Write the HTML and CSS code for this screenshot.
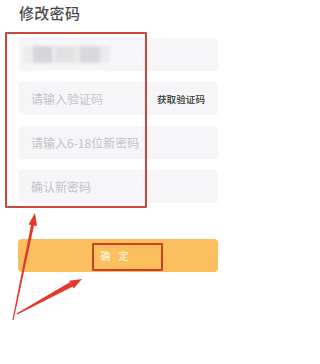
FILE: index.html
```html
<!DOCTYPE html>
<html lang="zh">
<head>
<meta charset="utf-8">
<title>修改密码</title>
<link rel="stylesheet" href="styles.css">
</head>
<body>
<div class="page">
  <h1 class="title">修改密码</h1>
  <div class="form">
    <div class="field masked">
      <span class="blur"></span>
    </div>
    <div class="field">
      <span class="ph">请输入验证码</span>
      <span class="code">获取验证码</span>
    </div>
    <div class="field"><span class="ph">请输入6-18位新密码</span></div>
    <div class="field"><span class="ph">确认新密码</span></div>
  </div>
  <button class="submit">确 定</button>

  <div class="mark mark-form"></div>
  <div class="mark mark-btn"></div>
  <svg class="arrows" width="242" height="364" viewBox="0 0 242 364">
    <polygon points="12.4,320 13.6,320 34.2,224.6 31.2,224" fill="#e5382b"/>
    <polygon points="35,213 37,226 28.5,224.4" fill="#e5382b"/>
    <polygon points="16.6,313.6 17.4,314.4 72.8,286.5 70.2,282" fill="#e5382b"/>
    <polygon points="82,279 73.6,288.6 69.2,280.8" fill="#e5382b"/>
  </svg>
</div>
</body>
</html>
```

FILE: styles.css
```css
html, body {
  margin: 0;
  padding: 0;
  background: #ffffff;
}
body {
  font-family: "Noto Sans CJK SC", "Noto Sans", sans-serif;
}
.page {
  position: relative;
  width: 242px;
  height: 364px;
  overflow: hidden;
  display: flex;
  flex-direction: column;
  padding: 3px 24px 0 19px;
  box-sizing: border-box;
}
.title {
  margin: 0;
  font-size: 15px;
  line-height: 20px;
  font-weight: 500;
  color: #4a4a4a;
  letter-spacing: 0.3px;
}
.form {
  margin-top: 15px;
  display: flex;
  flex-direction: column;
  gap: 11px;
}
.field {
  height: 33px;
  background: #f6f6f8;
  border-radius: 4px;
  display: flex;
  align-items: center;
  padding: 0 13px 0 12px;
  box-sizing: border-box;
}
.ph {
  flex: 1;
  font-size: 12px;
  color: #c2c2c6;
}
.code {
  font-size: 9.6px;
  color: #333333;
  font-weight: 500;
}
.masked {
  padding-left: 4px;
}
.blur {
  width: 87px;
  height: 17px;
  filter: blur(1.6px);
  background: linear-gradient(to right,
    #ececee 0, #ececee 10px,
    #d6d6d8 10px, #d6d6d8 29px,
    #eaeaec 29px, #eaeaec 33px,
    #e2e2e4 33px, #e2e2e4 52px,
    #eaeaec 52px, #eaeaec 57px,
    #d9d9db 57px, #d9d9db 77px,
    #ececee 77px, #ececee 87px);
}
.submit {
  margin-top: 36px;
  height: 33px;
  border: none;
  border-radius: 4px;
  background: #fcbf60;
  color: #fff8ee;
  font-family: inherit;
  font-size: 10px;
  letter-spacing: 3px;
  padding: 0 4px 0 0;
  margin-left: -1px;
}
.mark {
  position: absolute;
  box-sizing: border-box;
  border: 2px solid #d1443d;
  border-radius: 1px;
}
.mark-form {
  left: 5px;
  top: 32px;
  width: 142px;
  height: 176px;
}
.mark-btn {
  left: 92px;
  top: 243px;
  width: 71px;
  height: 28px;
  border-color: #cc4126;
}
.arrows {
  position: absolute;
  left: 0;
  top: 0;
}
```
